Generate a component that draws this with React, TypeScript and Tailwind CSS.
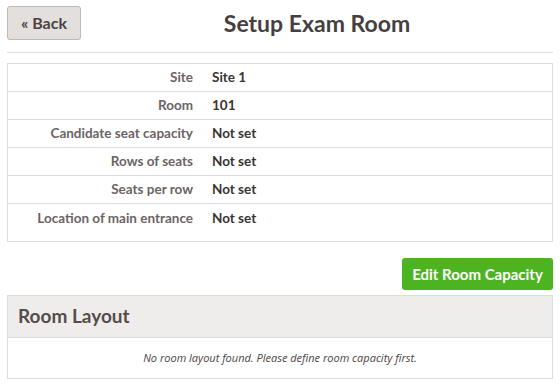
import React from "react";

const rows: { label: string; value: string }[] = [
  { label: "Site", value: "Site 1" },
  { label: "Room", value: "101" },
  { label: "Candidate seat capacity", value: "Not set" },
  { label: "Rows of seats", value: "Not set" },
  { label: "Seats per row", value: "Not set" },
  { label: "Location of main entrance", value: "Not set" },
];

export default function App() {
  return (
    <div className="w-[560px] h-[389px] bg-white px-[7px] pt-[6px] font-['Lato','Noto_Sans',sans-serif] text-[#463f3f]">
      {/* Header */}
      <div className="flex items-center h-[34px]">
        <button className="h-[34px] w-[74px] shrink-0 rounded-[3px] border border-[#bdb7b5] bg-[#e3dfdd] text-[16px] font-bold text-[#4a4343]">
          « Back
        </button>
        <h1 className="flex-1 text-center text-[23px] font-bold leading-none text-[#463f3f]">
          Setup Exam Room
        </h1>
      </div>
      <div className="mt-[12px] border-t border-[#dcdcdc]" />

      {/* Details */}
      <div className="mt-[10px] border border-[#dcdcdc] pb-[9px]">
        {rows.map((r, i) => (
          <div
            key={r.label}
            className={`flex h-[28px] items-center text-[13.5px] font-bold ${
              i < rows.length - 1 ? "border-b border-[#dcdcdc]" : ""
            }`}
          >
            <div className="w-[185px] text-right text-[#6b6463]">{r.label}</div>
            <div className="pl-[19px] text-[#393333]">{r.value}</div>
          </div>
        ))}
      </div>

      <div className="mt-[16px] flex justify-end">
        <button className="h-[32px] w-[151px] rounded-[3px] bg-[#4cb321] text-[15px] font-bold text-white">
          Edit Room Capacity
        </button>
      </div>

      {/* Room layout */}
      <div className="mt-[5px] border border-[#dcdcdc]">
        <div className="flex h-[42px] items-center border-b border-[#dcdcdc] bg-[#efedeb] px-[10px]">
          <h2 className="text-[19px] font-bold text-[#554d4c]">Room Layout</h2>
        </div>
        <div className="flex h-[40px] items-center justify-center font-['Open_Sans',sans-serif] text-[11px] italic text-[#4a4444]">
          No room layout found. Please define room capacity first.
        </div>
      </div>
    </div>
  );
}
